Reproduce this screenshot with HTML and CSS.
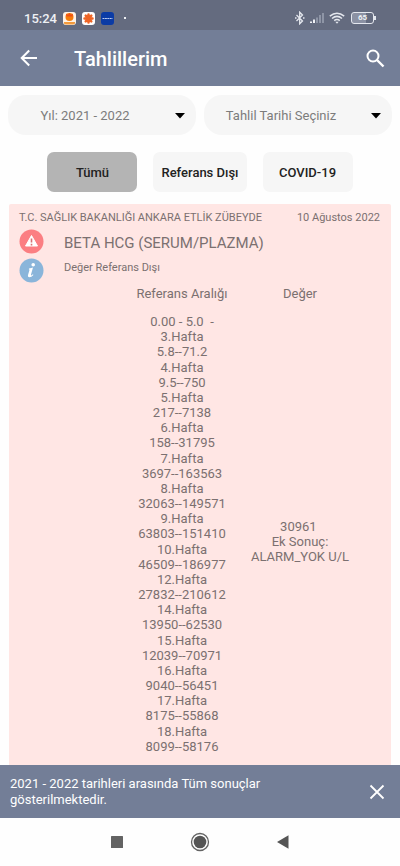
FILE: index.html
```html
<!DOCTYPE html>
<html lang="tr">
<head>
<meta charset="utf-8">
<meta name="viewport" content="width=device-width, initial-scale=1">
<title>Tahlillerim</title>
<link rel="stylesheet" href="styles.css">
</head>
<body>
<div class="status">
  <span class="clock">15:24</span>
  <div class="notices">
    <svg width="13" height="13" viewBox="0 0 13 13" aria-hidden="true"><rect width="13" height="13" rx="3" fill="#fff3e6"/><circle cx="6.5" cy="5" r="4" fill="#f57c0a"/><path d="M3 1.500l2 1.500 1.500-2 1.500 2 2-1.500-.5 3h-6z" fill="#f04e16"/><path d="M1 10h11v1.500q-1 1-2 1H3q-1 0-2-1z" fill="#f39a3c"/></svg>
    <svg width="13" height="13" viewBox="0 0 13 13" aria-hidden="true"><rect width="13" height="13" rx="3" fill="#fff"/><path d="M6.500 2.500v8M2.500 6.500h8M3.700 3.700l5.600 5.600M9.300 3.700L3.700 9.300" stroke="#ee6425" stroke-width="2.500" stroke-linecap="round"/></svg>
    <svg width="13" height="13" viewBox="0 0 13 13" aria-hidden="true"><rect width="13" height="13" rx="3" fill="#0b3ba5"/><path d="M1.500 6.500h10" stroke="#b9c9ee" stroke-width="1" stroke-dasharray="2 .4"/></svg>
  </div>
  <span class="dot"></span>
  <div class="signals">
    <svg width="10" height="14" viewBox="0 0 10 14" aria-hidden="true"><path d="M1.500 4l6 6L4.700 12.800V1.200L7.500 4l-6 6" fill="none" stroke="#e4e7ee" stroke-width="1.300"/><path d="M0 7h1.500M8 7h1.500" stroke="#e4e7ee" stroke-width="1.300"/></svg>
    <svg width="16" height="12" viewBox="0 0 16 12" aria-hidden="true"><path d="M1 9.500h2V11H1zM4 7.500h2V11H4z" fill="#f0f2f6"/><path d="M7 5.500h2V11H7zM10 3h2v8h-2zM13 1h2v10h-2z" fill="#8e95a6"/></svg>
    <svg width="16" height="12" viewBox="0 0 16 12" aria-hidden="true"><g fill="none" stroke="#e4e7ee" stroke-width="1.500"><path d="M.8 4.200q7.200-6 14.400 0"/><path d="M3 6.500q5-4.200 10 0"/><path d="M5.200 8.700q2.800-2.300 5.600 0"/></g><path d="M6.300 9.800h3.400L8 11.800z" fill="#e4e7ee"/></svg>
    <span class="battery"><span class="cell">65</span></span>
  </div>
</div>
<header class="appbar">
  <button class="icon-button" type="button" aria-label="Geri"><svg width="18" height="18" viewBox="0 0 18 18" aria-hidden="true"><path d="M17 9H2M9.200 1.500L1.700 9l7.500 7.500" fill="none" stroke="#fff" stroke-width="2"/></svg></button>
  <h1 class="title">Tahlillerim</h1>
  <button class="icon-button" type="button" aria-label="Ara"><svg width="19" height="19" viewBox="0 0 19 19" aria-hidden="true"><circle cx="7" cy="7" r="5.500" fill="none" stroke="#fff" stroke-width="2"/><path d="M11 11l6.500 6.500" stroke="#fff" stroke-width="2.400"/></svg></button>
</header>
<main class="content">
  <div class="selects">
    <div class="picker">
      <select class="select" aria-label="Yıl"><option>Yıl: 2021 - 2022</option></select>
      <svg class="caret" width="10" height="6" viewBox="0 0 10 6" aria-hidden="true"><path d="M0 0h10L5 5.500z"/></svg>
    </div>
    <div class="picker">
      <select class="select" aria-label="Tahlil Tarihi"><option>Tahlil Tarihi Seçiniz</option></select>
      <svg class="caret" width="10" height="6" viewBox="0 0 10 6" aria-hidden="true"><path d="M0 0h10L5 5.500z"/></svg>
    </div>
  </div>
  <div class="filters">
    <button class="filter selected" type="button">Tümü</button>
    <button class="filter" type="button">Referans Dışı</button>
    <button class="filter" type="button">COVID-19</button>
  </div>
  <article class="card">
    <div class="source"><span>T.C. SAĞLIK BAKANLIĞI ANKARA ETLİK ZÜBEYDE</span><time datetime="2022-08-10">10 Ağustos 2022</time></div>
    <div class="summary">
      <div class="badges">
        <svg width="25" height="25" viewBox="0 0 25 25" aria-hidden="true"><circle cx="12.500" cy="12.500" r="12" fill="#fb7e82"/><path d="M12.500 6.500L18.500 17H6.500z" fill="#fff" stroke="#fff" stroke-linejoin="round"/><path d="M12.500 9.500v4M12.500 14.800v1.700" stroke="#d87073" stroke-width="1.600"/></svg>
        <svg width="25" height="25" viewBox="0 0 25 25" aria-hidden="true"><circle cx="12.500" cy="12.500" r="12" fill="#8ab5da"/><circle cx="14.200" cy="6.800" r="1.800" fill="#fff"/><path d="M10 10.500q2.500-.3 4-1l-2 7q-.3 1.300.7.800l1.200-1 .5.600q-2 2.300-4 2.300-2 0-1.300-2.400l1.300-4.500q.3-1-.6-1z" fill="#fff"/></svg>
      </div>
      <div class="labels">
        <h2 class="test">BETA HCG (SERUM/PLAZMA)</h2>
        <p class="note">Değer Referans Dışı</p>
      </div>
    </div>
    <table class="results">
      <thead><tr class="row"><th>Referans Aralığı</th><th>Değer</th></tr></thead>
      <tbody><tr class="row">
        <td class="ranges">
          <span>0.00 - 5.0&nbsp; -</span>
          <span>3.Hafta</span><span>5.8--71.2</span>
          <span>4.Hafta</span><span>9.5--750</span>
          <span>5.Hafta</span><span>217--7138</span>
          <span>6.Hafta</span><span>158--31795</span>
          <span>7.Hafta</span><span>3697--163563</span>
          <span>8.Hafta</span><span>32063--149571</span>
          <span>9.Hafta</span><span>63803--151410</span>
          <span>10.Hafta</span><span>46509--186977</span>
          <span>12.Hafta</span><span>27832--210612</span>
          <span>14.Hafta</span><span>13950--62530</span>
          <span>15.Hafta</span><span>12039--70971</span>
          <span>16.Hafta</span><span>9040--56451</span>
          <span>17.Hafta</span><span>8175--55868</span>
          <span>18.Hafta</span><span>8099--58176</span>
        </td>
        <td class="value"><span>30961&nbsp;</span><span>Ek Sonuç:</span><span>ALARM_YOK U/L</span></td>
      </tr></tbody>
    </table>
  </article>
</main>
<div class="snackbar" role="status">
  <p class="message">2021 - 2022 tarihleri arasında Tüm sonuçlar gösterilmektedir.</p>
  <button class="icon-button" type="button" aria-label="Kapat"><svg width="16" height="16" viewBox="0 0 16 16" aria-hidden="true"><path d="M1.500 1.500l13 13M14.500 1.500l-13 13" stroke="#fff" stroke-width="1.800"/></svg></button>
</div>
<nav class="system">
  <button class="icon-button" type="button" aria-label="Son uygulamalar"><svg width="20" height="20" viewBox="0 0 20 20" aria-hidden="true"><rect x="4" y="4" width="12" height="12" rx=".5" fill="#636363"/></svg></button>
  <button class="icon-button" type="button" aria-label="Ana ekran"><svg width="20" height="20" viewBox="0 0 20 20" aria-hidden="true"><circle cx="10" cy="10" r="8.500" fill="none" stroke="#636363" stroke-width="1.300"/><circle cx="10" cy="10" r="6.300" fill="#555"/></svg></button>
  <button class="icon-button" type="button" aria-label="Geri dön"><svg width="20" height="20" viewBox="0 0 20 20" aria-hidden="true"><path d="M4 10l11.500-6.800v13.600z" fill="#555"/></svg></button>
</nav>
</body>
</html>
```
FILE: styles.css
```css
* {
  box-sizing: border-box;
}

body {
  margin: 0;
  min-height: 100vh;
  display: flex;
  flex-direction: column;
  background: #fefefe;
  color: #7b7070;
  font-family: Roboto, sans-serif;
  font-size: 13px;
  line-height: 15px;
}

h1,
h2,
p {
  margin: 0;
}

button,
select {
  margin: 0;
  border: 0;
  font: inherit;
}

svg {
  display: block;
}

.icon-button {
  padding: 0;
  background: transparent;
}

.status {
  display: flex;
  align-items: center;
  height: 30px;
  padding: 6px 24px 0;
  background: #646b7f;
  color: #eef0f4;
}

.clock {
  font-weight: 500;
}

.notices {
  display: flex;
  gap: 6px;
  margin-left: 6px;
}

.dot {
  width: 2px;
  height: 2px;
  margin-left: 10px;
  background: #eef0f4;
}

.signals {
  display: flex;
  align-items: center;
  gap: 4px;
  margin-left: auto;
}

.battery {
  display: flex;
  align-items: center;
  margin-left: 2px;
}

.battery::after {
  content: "";
  width: 2px;
  height: 4px;
  background: #e4e7ee;
}

.cell {
  width: 23px;
  height: 12px;
  border: 1px solid #e4e7ee;
  border-radius: 3px;
  font-size: 8px;
  font-weight: 700;
  line-height: 10px;
  text-align: center;
  background: linear-gradient(90deg, #8b91a3 65%, transparent 65%);
}

.appbar {
  display: flex;
  align-items: center;
  height: 56px;
  padding: 0 15px 0 20px;
  background: #737e97;
  color: #fff;
}

.title {
  flex: 1;
  margin-left: 36px;
  padding-top: 2px;
  font-size: 20px;
  font-weight: 500;
  line-height: 24px;
}

.content {
  flex: 1;
  display: flex;
  flex-direction: column;
  padding: 9px 8px 0;
}

.selects {
  display: grid;
  grid-template-columns: 1fr 1fr;
  gap: 8px;
}

.picker {
  position: relative;
}

.select {
  appearance: none;
  display: block;
  width: 100%;
  height: 40px;
  padding: 0 34px 0 0;
  border-radius: 18px;
  background: #f6f6f6;
  color: #7c7c7c;
  text-align-last: center;
}

.caret {
  position: absolute;
  top: 18px;
  right: 11px;
  pointer-events: none;
}

.filters {
  display: flex;
  justify-content: center;
  gap: 16px;
  margin: 17px 0 12px;
}

.filter {
  min-width: 90px;
  height: 40px;
  padding: 0 8px;
  border-radius: 7px;
  background: #f6f6f6;
  color: #222;
  font-weight: 500;
}

.selected {
  background: #b4b4b4;
}

.card {
  flex: 1;
  display: flex;
  flex-direction: column;
  margin: 0 1px;
  padding-top: 6px;
  border-radius: 2px 2px 0 0;
  background: #ffe6e4;
}

.source {
  display: flex;
  justify-content: space-between;
  padding: 0 11px 0 10px;
  font-size: 11px;
}

.summary {
  display: flex;
  gap: 20px;
  padding: 4px 10px 0;
}

.badges {
  display: grid;
  gap: 4px;
}

.labels {
  padding-top: 5px;
}

.test {
  font-size: 15px;
  font-weight: 400;
  line-height: 18px;
}

.note {
  margin-top: 8px;
  font-size: 11px;
}

.results {
  flex: 1;
  display: grid;
  grid-template-rows: auto 1fr;
  gap: 13px;
  margin: 3px 32px 0 114px;
  text-align: center;
}

.results thead,
.results tbody {
  display: grid;
}

.row {
  display: grid;
  grid-template-columns: 1fr 1fr;
}

.row th {
  padding: 0;
  font-weight: 400;
}

.row td {
  display: flex;
  flex-direction: column;
  white-space: nowrap;
}

.row .ranges {
  justify-content: space-between;
  padding: 0 0 11px;
}

.row .value {
  justify-content: center;
  padding: 3px 0 0;
}

.snackbar {
  display: flex;
  align-items: center;
  justify-content: space-between;
  gap: 32px;
  padding: 11px 15px 10px 10px;
  background: #737e97;
  color: #fff;
}

.message {
  max-width: 280px;
  line-height: 16px;
}

.system {
  display: flex;
  align-items: center;
  justify-content: center;
  gap: 63px;
  height: 48px;
}
```
